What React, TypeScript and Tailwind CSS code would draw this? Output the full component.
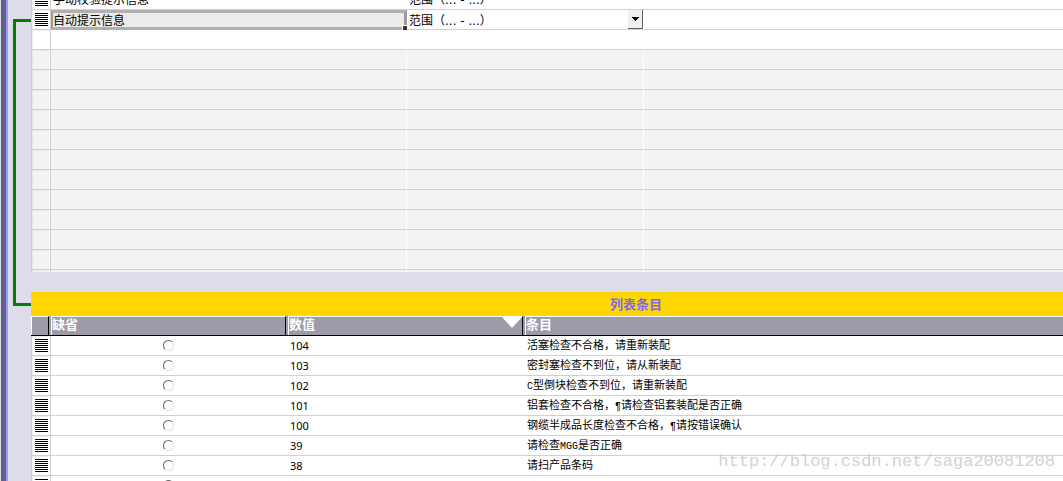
import { useState } from 'react';
import type { ReactNode } from 'react';
import clsx from 'clsx';

interface ListEntry {
  value: string;
  text: string;
}

const ENTRIES: ListEntry[] = [
  { value: '104', text: '活塞检查不合格，请重新装配' },
  { value: '103', text: '密封塞检查不到位，请从新装配' },
  { value: '102', text: 'C型倒块检查不到位，请重新装配' },
  { value: '101', text: '铝套检查不合格，¶请检查铝套装配是否正确' },
  { value: '100', text: '钢缆半成品长度检查不合格，¶请按错误确认' },
  { value: '39', text: '请检查MGG是否正确' },
  { value: '38', text: '请扫产品条码' },
  { value: '', text: '' },
];

const EMPTY_ROWS = 12;

function ListIcon() {
  return (
    <svg width="13" height="13" viewBox="0 0 13 13" shapeRendering="crispEdges" className="block" aria-hidden="true">
      {[0, 2, 4, 6, 8, 10, 12].map((y) => (
        <rect key={y} x="0" y={y} width="13" height="1" fill="#000" />
      ))}
    </svg>
  );
}

function GutterCell({ icon = false, muted = false }: { icon?: boolean; muted?: boolean }) {
  return (
    <td className="h-5 border-x border-b border-[#d0d0d0] p-0">
      <div
        className={clsx(
          'flex h-[19px] items-start justify-center border-x border-t pt-0.5',
          muted ? 'border-[#e6e6e6] border-r-white' : 'border-[#efefef] border-r-white'
        )}
      >
        {icon && <ListIcon />}
      </div>
    </td>
  );
}

function Cell({ children, divider = false }: { children?: ReactNode; divider?: boolean }) {
  return (
    <td className={clsx('h-5 border-b border-[#d0d0d0] p-0', divider && 'border-r border-r-white')}>
      <div className="h-[19px] whitespace-nowrap pl-0.5 leading-5">{children}</div>
    </td>
  );
}

// Latin runs are set in the half-width mono face next to the CJK text
function MixedText({ text }: { text: string }) {
  return (
    <>
      {text.split(/([A-Z¶]+)/).map((part, i) =>
        i % 2 ? (
          <span key={i} className="font-['Liberation_Mono',monospace] text-[10px] leading-none">{part}</span>
        ) : (
          part
        )
      )}
    </>
  );
}

function HeaderCell({ label, sorted = false, last = false }: { label?: string; sorted?: boolean; last?: boolean }) {
  return (
    <th scope="col" className="h-5 border-b border-black bg-[#9c9ba7] p-0 text-left">
      <div
        className={clsx(
          'flex h-[19px] justify-between border-l border-t border-white',
          !last && 'mr-0.5 border-r border-r-black'
        )}
      >
        <span className="text-[13px] font-bold leading-4 text-white">{label}</span>
        {sorted && (
          <svg width="20" height="11" viewBox="0 0 20 11" aria-hidden="true">
            <path d="M0 0H20L10 11Z" fill="#fff" />
          </svg>
        )}
      </div>
    </th>
  );
}

function ListTable() {
  return (
    <div className="h-[272px] shrink-0 overflow-hidden">
      {/* scrolled half a row down */}
      <table className="-mt-2.5 w-full table-fixed border-separate border-spacing-0 text-[12px]">
        <colgroup>
          <col className="w-5" />
          <col className="w-[356px]" />
          <col className="w-[237px]" />
          <col />
        </colgroup>
        <tbody>
          <tr className="bg-white">
            <GutterCell icon />
            <Cell>手动校验提示信息</Cell>
            <Cell>范围（... - ...）</Cell>
            <Cell />
          </tr>
          <tr className="bg-white">
            <GutterCell icon />
            <td className="relative h-5 border-y-[3px] border-l-2 border-r-[3px] border-x-[#999] border-y-[#b0b0b0] bg-[#ebebeb] p-0">
              <div className="h-[14px] leading-4">自动提示信息</div>
              <span className="absolute -bottom-[3px] -right-[3px] size-[5px] border-l border-t border-white bg-[#333]" />
            </td>
            <td className="h-5 border-b border-r border-[#d0d0d0] border-r-white p-0">
              <div className="relative flex h-[19px] items-stretch">
                <select aria-label="范围" className="w-full appearance-none bg-transparent p-0 pl-0.5 pt-0.5 outline-none">
                  <option>范围（... - ...）</option>
                </select>
                <span className="pointer-events-none absolute inset-y-0 right-0 flex w-[15px] items-center justify-center border-b border-r border-[#606060] bg-[#f0f0f0]">
                  <svg width="7" height="4" viewBox="0 0 7 4" shapeRendering="crispEdges" aria-hidden="true">
                    <path d="M0 0H7V1H6V2H5V3H4V4H3V3H2V2H1V1H0Z" />
                  </svg>
                </span>
              </div>
            </td>
            <Cell />
          </tr>
          <tr className="bg-white">
            <GutterCell />
            <Cell />
            <Cell />
            <Cell />
          </tr>
          {Array.from({ length: EMPTY_ROWS }, (_, i) => (
            <tr key={i} className="bg-[#f3f3f3]">
              <GutterCell muted />
              <Cell divider />
              <Cell divider />
              <Cell />
            </tr>
          ))}
        </tbody>
      </table>
    </div>
  );
}

function EntryTable() {
  const [selected, setSelected] = useState<number | null>(null);

  return (
    <table className="w-full table-fixed border-separate border-spacing-0 bg-white text-[11px]">
      <colgroup>
        <col className="w-5" />
        <col className="w-[237px]" />
        <col className="w-[237px]" />
        <col />
      </colgroup>
      <thead>
        <tr>
          <HeaderCell />
          <HeaderCell label="缺省" />
          <HeaderCell label="数值" sorted />
          <HeaderCell label="条目" last />
        </tr>
      </thead>
      <tbody>
        {ENTRIES.map((entry, i) => (
          <tr key={i}>
            <GutterCell icon />
            <td className="h-5 border-b border-r border-[#d0d0d0] border-r-white p-0">
              <div className="flex h-[17px] items-center justify-center pr-px">
                <input
                  type="radio"
                  name="default-entry"
                  aria-label={`缺省 ${entry.value}`}
                  checked={selected === i}
                  onChange={() => setSelected(i)}
                  className="m-0 size-[11px] appearance-none rounded-full border border-[#e0e0e0] border-l-[#666] border-t-[#666] bg-white checked:bg-black"
                />
              </div>
            </td>
            <Cell divider>
              <span className="font-['Noto_Sans',sans-serif]">{entry.value}</span>
            </Cell>
            <Cell>
              <MixedText text={entry.text} />
            </Cell>
          </tr>
        ))}
      </tbody>
    </table>
  );
}

export default function App() {
  return (
    <div className="relative flex h-screen overflow-hidden bg-[#dddde9] font-['DejaVu_Sans','Noto_Sans_CJK_SC',sans-serif] text-black">
      {/* Left rail with the connector between the two tables */}
      <div className="flex w-[31px] shrink-0">
        <div className="ml-px w-[5px] bg-[#5f5f87]" />
        <div className="w-0.5 bg-[#9999ff]" />
        <div className="ml-[5px] mt-[19px] h-[287px] flex-1 border-[3px] border-r-0 border-[#008000]" />
      </div>

      <main className="flex min-w-0 flex-1 flex-col">
        <ListTable />
        <section className="mt-5 min-h-0 flex-1 overflow-hidden">
          <h2 className="h-6 bg-[#ffd700] pl-[178px] text-center text-[13px] font-bold leading-[26px] text-[#7b68ee]">
            列表条目
          </h2>
          <EntryTable />
        </section>
      </main>

      <span className="pointer-events-none absolute bottom-[7px] right-2 font-['Liberation_Mono',monospace] text-[17px] leading-6 text-[#d2d2cd]">
        http://blog.csdn.net/saga20081208
      </span>
    </div>
  );
}
